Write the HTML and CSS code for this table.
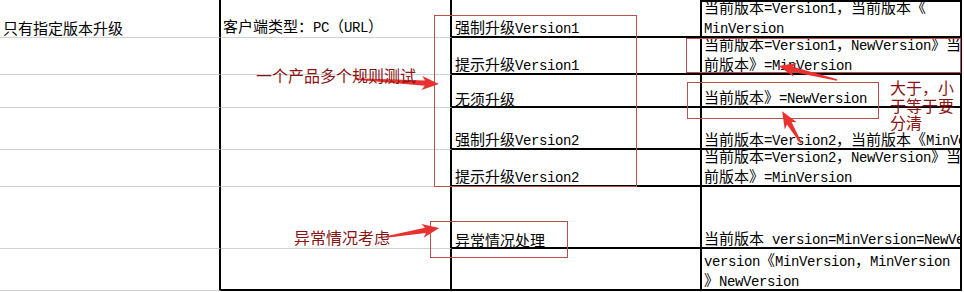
FILE: index.html
```html
<!DOCTYPE html>
<html lang="zh-CN">
<head>
<meta charset="utf-8">
<title>版本升级规则</title>
<link rel="stylesheet" href="styles.css">
</head>
<body>
<div class="page">
  <div class="sheet">
    <div class="cell c0"><span class="t">只有指定版本升级</span></div>
    <div class="cell c1"><span class="t">客户端类型：<span class="en">PC</span>（<span class="en">URL</span>）</span></div>
    <div class="cell c2"><span class="t">强制升级<span class="en">Version1</span></span></div>
    <div class="cell c3 top"><span class="t">当前版本<span class="en">=Version1</span>，当前版本《<br><span class="en">MinVersion</span></span></div>

    <div class="cell c0"></div>
    <div class="cell c1"></div>
    <div class="cell c2"><span class="t">提示升级<span class="en">Version1</span></span></div>
    <div class="cell c3"><span class="t">当前版本<span class="en">=Version1</span>，<span class="en">NewVersion</span>》当<br>前版本》<span class="en">=MinVersion</span></span></div>

    <div class="cell c0"></div>
    <div class="cell c1"></div>
    <div class="cell c2"><span class="t">无须升级</span></div>
    <div class="cell c3"><span class="t">当前版本》<span class="en">=NewVersion</span></span></div>

    <div class="cell c0"></div>
    <div class="cell c1"></div>
    <div class="cell c2"><span class="t">强制升级<span class="en">Version2</span></span></div>
    <div class="cell c3"><span class="t">当前版本<span class="en">=Version2</span>，当前版本《<span class="en">MinVersion</span></span></div>

    <div class="cell c0"></div>
    <div class="cell c1"></div>
    <div class="cell c2"><span class="t">提示升级<span class="en">Version2</span></span></div>
    <div class="cell c3"><span class="t">当前版本<span class="en">=Version2</span>，<span class="en">NewVersion</span>》当<br>前版本》<span class="en">=MinVersion</span></span></div>

    <div class="cell c0"></div>
    <div class="cell c1"></div>
    <div class="cell c2"><span class="t">异常情况处理</span></div>
    <div class="cell c3"><span class="t">当前版本<span class="en"> version=MinVersion=NewVersion</span></span></div>

    <div class="cell c0"></div>
    <div class="cell c1 bottom"></div>
    <div class="cell c2"></div>
    <div class="cell c3"><span class="t"><span class="en">version</span>《<span class="en">MinVersion</span>，<span class="en">MinVersion</span><br>》<span class="en">NewVersion</span></span></div>
  </div>

  <svg class="marks" width="964" height="292" viewBox="0 0 964 292" xmlns="http://www.w3.org/2000/svg">
    <g fill="none" stroke="#b9504c" stroke-width="1">
      <rect x="434.5" y="15.5" width="202" height="171"/>
      <rect x="686.5" y="38.5" width="274" height="34"/>
      <rect x="687.5" y="82.5" width="191" height="36"/>
      <rect x="430.5" y="221.5" width="137" height="36"/>
    </g>
    <g fill="#e8322f">
      <g transform="translate(356 79) rotate(3.4)">
        <polygon points="0,-0.8 69,-2.6 66,-7 83,0 66,7 69,2.6 0,0.8"/>
      </g>
      <g transform="translate(386 237) rotate(-9.5)">
        <polygon points="0,-0.8 40,-2.6 37,-7 54,0 37,7 40,2.6 0,0.8"/>
      </g>
      <g transform="translate(837 80) rotate(-166.4)">
        <polygon points="0,-0.8 46,-2.6 43,-7 60,0 43,7 46,2.6 0,0.8"/>
      </g>
      <g transform="translate(801 143) rotate(-120.7)">
        <polygon points="0,-0.8 23,-2.6 20,-7 37,0 20,7 23,2.6 0,0.8"/>
      </g>
    </g>
  </svg>

  <div class="note n1">一个产品多个规则测试</div>
  <div class="note n2">异常情况考虑</div>
  <div class="note n3">大于，小<br>于等于要<br>分清</div>
</div>
</body>
</html>
```

FILE: styles.css
```css
html, body {
  margin: 0;
  padding: 0;
  background: #ffffff;
}

.page {
  position: relative;
  width: 964px;
  height: 292px;
  overflow: hidden;
  background: #ffffff;
}

.sheet {
  display: grid;
  grid-template-columns: 221px 231px 250px 260px;
  grid-template-rows: 38px 37px 33px 42px 37px 62px 42px;
  font-family: "Noto Sans CJK SC", sans-serif;
  font-size: 15px;
  color: #000000;
}

.cell {
  box-sizing: border-box;
  display: flex;
  flex-direction: column;
  justify-content: flex-end;
  white-space: nowrap;
  min-width: 0;
  border-right: 2px solid #000000;
}

.t {
  display: block;
  line-height: 18px;
}

.en {
  font-family: "Liberation Mono", monospace;
  font-size: 14px;
  letter-spacing: -0.4px;
}

.c0 {
  border-bottom: 1px solid #d2d2d2;
  padding-left: 3px;
}

.c1 {
  border-bottom: 1px solid #d2d2d2;
  padding-left: 2px;
}

.c1.bottom {
  border-bottom: 2px solid #000000;
}

.c2 {
  border-bottom: 2px solid #000000;
  padding-left: 3px;
}

.c3 {
  border-bottom: 2px solid #000000;
  padding-left: 2px;
  overflow-x: clip;
}

.c3.top {
  border-top: 2px solid #000000;
}

.c2 .t,
.c3 .t {
  margin-bottom: -2px;
}

.marks {
  position: absolute;
  left: 0;
  top: 0;
  pointer-events: none;
}

.note {
  position: absolute;
  font-family: "Noto Sans CJK SC", sans-serif;
  font-size: 16px;
  line-height: 16px;
  color: #8a1414;
  white-space: nowrap;
}

.n1 {
  left: 256px;
  top: 67px;
}

.n2 {
  left: 294px;
  top: 229px;
}

.n3 {
  left: 890px;
  top: 79px;
  line-height: 17.5px;
}
```
